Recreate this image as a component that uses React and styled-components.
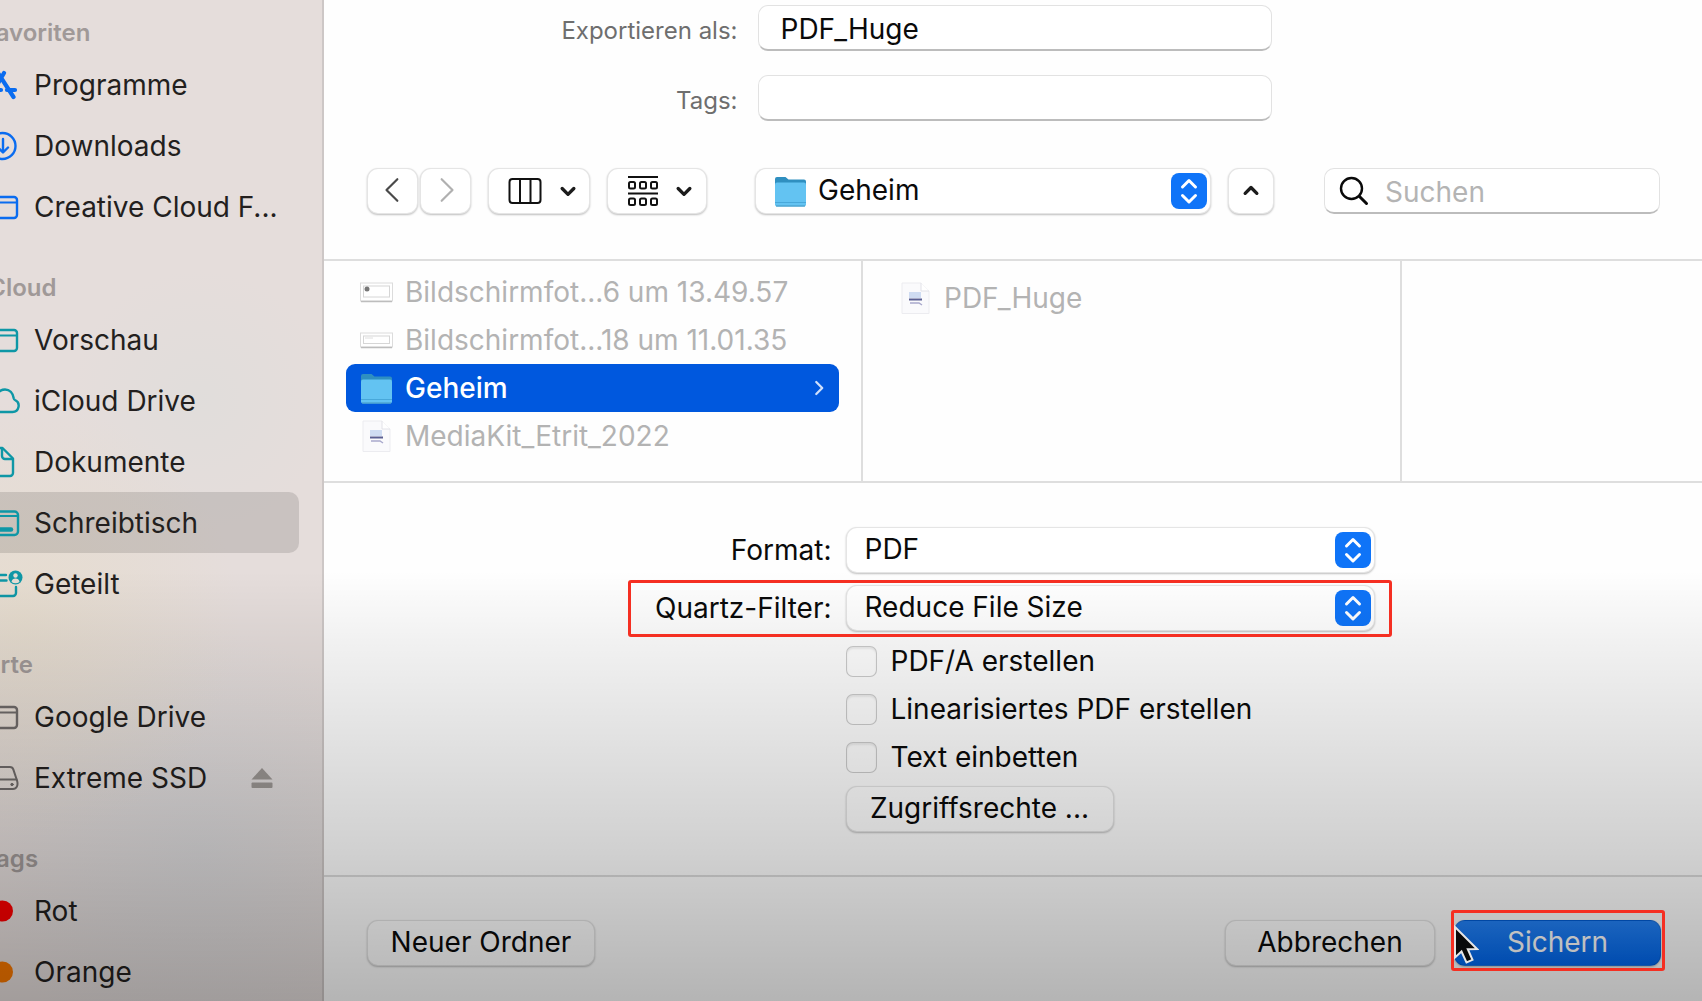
import React from "react";
import styled, { createGlobalStyle } from "styled-components";

const GlobalStyle = createGlobalStyle`
    * {
        box-sizing: border-box;
    }

    body {
        margin: 0;
        background: #fefefe;
    }

    body, button, input, select {
        font-family: Inter, "Liberation Sans", sans-serif;
        font-size: 28px;
        color: #0a0a0a;
    }

    svg {
        display: block;
        flex-shrink: 0;
    }
`;

const Window = styled.div`
    position: relative;
    display: flex;
    height: 100vh;
    overflow: hidden;
    background: #fefefe;
`;

/* darkens the lower part of the window, the red frames stay above it */
const Shade = styled.div`
    position: absolute;
    inset: 0;
    z-index: 1;
    pointer-events: none;
    background: linear-gradient(to bottom, rgba(0, 0, 0, 0) 57%, rgba(0, 0, 0, 0.05) 64%, rgba(0, 0, 0, 0.18) 85%, rgba(0, 0, 0, 0.29) 100%);
`;

const Sidebar = styled.nav`
    display: flex;
    flex-direction: column;
    flex-shrink: 0;
    gap: 30px;
    width: 344px;
    margin-left: -20px;
    padding-top: 12px;
    overflow: hidden;
    border-right: 2px solid #cdc7c6;
    background:
        radial-gradient(circle at 40px 620px, rgba(230, 220, 205, 0.9), rgba(230, 220, 205, 0) 220px),
        radial-gradient(circle at 220px 400px, rgba(224, 221, 219, 0.9), rgba(224, 221, 219, 0) 130px),
        radial-gradient(circle at 220px 850px, rgba(216, 217, 220, 0.7), rgba(216, 217, 220, 0) 220px),
        #e5dddb;
`;

const Group = styled.section`
    display: flex;
    flex-direction: column;

    & h2 {
        margin: 0;
        padding-left: 2px;
        font-size: 24px;
        font-weight: 600;
        line-height: 42px;
        color: #a09998;
    }
`;

const Place = styled.button`
    display: flex;
    align-items: center;
    gap: 10px;
    height: 61px;
    margin-right: 23px;
    padding: 0 26px 0 0;
    border: none;
    border-radius: 0 10px 10px 0;
    background: ${(props) => (props.$selected ? "rgba(0, 0, 0, 0.12)" : "transparent")};
    color: #231f1e;
    text-align: left;
    white-space: nowrap;

    & span {
        flex: 1;
    }
`;

const Panel = styled.main`
    display: flex;
    flex: 1;
    flex-direction: column;
    min-width: 0;
`;

const NameForm = styled.div`
    display: grid;
    grid-template-columns: 1fr 514px 1fr;
    align-items: center;
    gap: 24px 20px;
    padding: 5px 0 0 3px;

    & label {
        grid-column: 1;
        padding-top: 4px;
        font-size: 24px;
        color: #6e6e6e;
        text-align: right;
    }
`;

const TextInput = styled.input`
    width: 100%;
    height: 46px;
    padding: 2px 22px 0;
    border: 1px solid #e2e2e2;
    border-bottom: 2px solid #bcbcbc;
    border-radius: 10px;
    background: #ffffff;
    outline: none;
`;

const Toolbar = styled.div`
    display: flex;
    align-items: center;
    gap: 17px;
    padding: 47px 42px 45px 43px;
`;

const NavPair = styled.div`
    display: flex;
    gap: 2px;
`;

const Button = styled.button`
    display: flex;
    align-items: center;
    justify-content: center;
    gap: 16px;
    flex-shrink: 0;
    width: ${(props) => props.$width}px;
    height: 46px;
    padding: ${(props) => (props.$menu ? "0 0 0 8px" : "0 0 2px")};
    border: 1px solid rgba(0, 0, 0, 0.1);
    border-radius: 11px;
    background: ${(props) => (props.$primary ? "linear-gradient(#2382f7, #0067ee)" : "#ffffff")};
    box-shadow: 0 1px 2px rgba(0, 0, 0, 0.25);
    color: ${(props) => (props.$primary ? "#ffffff" : "#0a0a0a")};
    white-space: nowrap;
`;

const PopUp = styled.div`
    position: relative;
    display: flex;
    align-items: center;
    flex: ${(props) => (props.$grow ? "1" : "none")};
    width: ${(props) => (props.$grow ? "auto" : "529px")};
    margin-left: ${(props) => (props.$grow ? "31px" : "0")};

    & select {
        width: 100%;
        height: 46px;
        padding: 0 60px 3px ${(props) => (props.$grow ? "62px" : "18px")};
        border: 1px solid rgba(0, 0, 0, 0.1);
        border-radius: 11px;
        background: #ffffff;
        box-shadow: 0 1px 2px rgba(0, 0, 0, 0.25);
        appearance: none;
        outline: none;
    }
`;

const PopUpIcon = styled.span`
    position: absolute;
    left: 19px;
    pointer-events: none;
`;

const PopUpArrows = styled.span`
    position: absolute;
    right: 4px;
    pointer-events: none;
`;

const Search = styled.label`
    display: flex;
    align-items: center;
    gap: 16px;
    width: 336px;
    height: 46px;
    margin-left: 33px;
    padding: 0 14px;
    border: 1px solid #e2e2e2;
    border-bottom: 2px solid #bcbcbc;
    border-radius: 10px;
    background: #ffffff;

    & input {
        width: 100%;
        min-width: 0;
        padding: 2px 0 0;
        border: none;
        background: transparent;
        outline: none;
    }

    & input::placeholder {
        color: #b4b4b4;
    }
`;

const Browser = styled.div`
    display: grid;
    grid-template-columns: 537px 539px 1fr;
    height: 224px;
    border-top: 2px solid #dedede;
    border-bottom: 2px solid #dedede;
`;

const Column = styled.div`
    display: flex;
    flex-direction: column;
    padding: ${(props) => (props.$inset ? "13px" : "7px")} 22px;

    & + & {
        border-left: 2px solid #dedede;
    }
`;

const File = styled.button`
    display: flex;
    align-items: center;
    gap: 12px;
    height: 48px;
    padding: 0 10px 0 14px;
    border: none;
    border-radius: 9px;
    background: ${(props) => (props.$selected ? "#0058de" : "transparent")};
    color: ${(props) => (props.$selected ? "#ffffff" : "#b3b3b3")};
    font-weight: ${(props) => (props.$selected ? 500 : 400)};
    text-align: left;
    white-space: nowrap;

    & span {
        flex: 1;
        padding-bottom: 1px;
    }
`;

const Options = styled.div`
    display: flex;
    flex: 1;
    flex-direction: column;
    align-items: center;
    gap: 12px;
    padding-top: 44px;
`;

const OptionRow = styled.div`
    position: relative;
    display: flex;
    align-items: center;
    gap: 14px;

    & > label {
        width: 180px;
        text-align: right;
        white-space: nowrap;
    }
`;

const Extras = styled.div`
    display: flex;
    flex-direction: column;
    align-items: flex-start;
    width: 529px;
    margin: -6px 0 0 194px;

    & > :last-child {
        margin-top: 5px;
    }
`;

const Check = styled.label`
    display: flex;
    align-items: center;
    gap: 14px;
    height: 48px;

    & input {
        width: 31px;
        height: 31px;
        margin: 0;
        border: 1px solid rgba(0, 0, 0, 0.2);
        border-radius: 7px;
        background: #ffffff;
        box-shadow: inset 0 2px 2px rgba(0, 0, 0, 0.08);
        appearance: none;
    }
`;

const Frame = styled.span`
    position: absolute;
    inset: ${(props) => props.$inset};
    z-index: 2;
    border: 3px solid #f52f22;
    border-radius: 3px;
    pointer-events: none;
`;

const Footer = styled.footer`
    display: flex;
    gap: 19px;
    padding: 43px 41px 35px 43px;
    border-top: 2px solid #dcdcdc;

    & > :first-child {
        margin-right: auto;
    }
`;

const SaveSlot = styled.div`
    position: relative;
`;

const Pointer = styled.span`
    position: absolute;
    top: 5px;
    left: -1px;
    z-index: 3;
    pointer-events: none;
`;

const BLUE = "#0a6cf0";
const TEAL = "#0e97a6";
const GRAY = "#6f6a69";

const PlaceIcon = ({ color, children }) => (
    <svg width="44" height="44" viewBox="0 0 44 44" fill="none" stroke={color} strokeWidth="2.4" strokeLinecap="round" strokeLinejoin="round">
        {children}
    </svg>
);

const windowShape = (
    <>
        <rect x="8" y="12" width="29" height="21" rx="3" />
        <path d="M8 17.5h29" strokeWidth="2" />
    </>
);

const AppsIcon = () => (
    <PlaceIcon color={BLUE}>
        <path d="M24 10 10 34M18 10l15.500 24M5 27h16M27 27h8" strokeWidth="4.200" />
    </PlaceIcon>
);

const DownloadIcon = () => (
    <PlaceIcon color={BLUE}>
        <circle cx="22.500" cy="22" r="13" />
        <path d="M23 15v13M18 23.500l5 5 5-5" />
    </PlaceIcon>
);

const WindowIcon = ({ color }) => <PlaceIcon color={color}>{windowShape}</PlaceIcon>;

const CloudIcon = () => (
    <PlaceIcon color={TEAL}>
        <path d="M12 33h20.500a6.300 6.300 0 0 0 2.500-12c-.8-.4-1-.6-1.200-1.500C33 14 29.500 10.500 25 10.500c-4 0-6.600 2-8.200 5.200-4-.8-6.800 1.300-7.300 4.800C6.500 21.500 5 24 5 26.600 5 30.500 8 33 12 33z" />
    </PlaceIcon>
);

const DocIcon = () => (
    <PlaceIcon color={TEAL}>
        <path d="M13 8h9.500L33 18.500V33a3 3 0 0 1-3 3H13a3 3 0 0 1-3-3V11a3 3 0 0 1 3-3z" />
        <path d="M22 8.500V16a3 3 0 0 0 3 3h7.500" />
    </PlaceIcon>
);

const DesktopIcon = () => (
    <PlaceIcon color={TEAL}>
        <rect x="6" y="10.500" width="32" height="23.500" rx="3.500" />
        <path d="M6 15h32" strokeWidth="2" />
        <path d="M13 28.500h18" strokeWidth="4.500" />
    </PlaceIcon>
);

const SharedIcon = () => (
    <PlaceIcon color={TEAL}>
        <path d="M26 13H11a3 3 0 0 0-3 3v15a3 3 0 0 0 3 3h22a3 3 0 0 0 3-3v-6M8 18.500h18.500" />
        <circle cx="35.500" cy="15.500" r="7" fill={TEAL} stroke="none" />
        <circle cx="35.500" cy="13.500" r="2.200" fill="#e6ddd4" stroke="none" />
        <path d="M31.500 20c.5-2.400 2-3.400 4-3.400s3.500 1 4 3.400c-2.500 1.700-5.500 1.700-8 0z" fill="#e6ddd4" stroke="none" />
    </PlaceIcon>
);

const DriveIcon = () => (
    <PlaceIcon color={GRAY}>
        <path d="M14 11h16c1.800 0 2.800.8 3.300 2.400L37 24.500c1.500 5-.5 8.500-4 8.500H11c-3.500 0-5.500-3.500-4-8.500l3.700-11.100C11.200 11.800 12.200 11 14 11z" strokeWidth="2" />
        <path d="M7.500 23.500h29" strokeWidth="2" />
        <circle cx="32" cy="28.500" r="1.200" fill={GRAY} strokeWidth="1" />
    </PlaceIcon>
);

const TagIcon = ({ color }) => (
    <PlaceIcon color="none">
        <circle cx="22.500" cy="22" r="10.500" fill={color} />
    </PlaceIcon>
);

const EjectIcon = () => (
    <svg width="22" height="22" viewBox="0 0 22 22" fill="#9b9693">
        <path d="M11 1 21.500 12.500H.5z" />
        <rect x="0.500" y="15.500" width="21" height="5.500" rx="1" />
    </svg>
);

const FolderIcon = () => (
    <svg width="33" height="33" viewBox="0 0 33 33">
        <path d="M1 4a2 2 0 0 1 2-2h8.500l3 2.500H30a2 2 0 0 1 2 2V14H1z" fill="#2f8fc0" />
        <rect x="1" y="7.500" width="31" height="24" rx="2" fill="#63c3f2" />
        <path d="M1 27.500h31" stroke="#48a8da" strokeWidth="1" />
        <path d="M2 31h29" stroke="#4a9fca" strokeWidth="1.200" />
    </svg>
);

const ScreenshotIcon = ({ flat }) => (
    <svg width="33" height="33" viewBox="0 0 33 33">
        <rect x="0.500" y={flat ? 9 : 7} width="32" height={flat ? 14 : 18} fill="#ffffff" stroke="#dcdcdc" />
        <path d={flat ? "M1 23.500h31" : "M1 25.500h31"} stroke="#bdbdbd" strokeWidth="1.500" />
        <rect x="3.500" y={flat ? 12 : 10} width="26" height={flat ? 7.5 : 11} fill="none" stroke="#d6d6d6" />
        {flat ? <path d="M5 14h8" stroke="#dedede" /> : <circle cx="7" cy="13" r="2.500" fill="#777777" />}
    </svg>
);

const PdfIcon = () => (
    <svg width="33" height="33" viewBox="0 0 33 33">
        <path d="M3 1h19l8 8v22.500H3z" fill="#fafafc" stroke="#ececf0" />
        <path d="M22 1v8h8" fill="#ffffff" stroke="#e2e2e8" />
        <rect x="10" y="10" width="12" height="6" fill="#cfdcf2" />
        <path d="M10 17.500h13" stroke="#5a5f92" strokeWidth="2" />
        <path d="M11 21h9l3 2" fill="none" stroke="#a9a9cc" strokeWidth="1.500" />
    </svg>
);

const Arrow = ({ d, color = "#1c1c1c", size = 24, weight = 2 }) => (
    <svg width={size} height={size} viewBox="0 0 24 24" fill="none" stroke={color} strokeWidth={weight} strokeLinecap="round" strokeLinejoin="round">
        <path d={d} />
    </svg>
);

const ColumnsIcon = () => (
    <svg width="34" height="28" viewBox="0 0 34 28" fill="none" stroke="#111111" strokeWidth="2">
        <rect x="1.500" y="2" width="31" height="24" rx="3" />
        <path d="M12 2v24M22.500 2v24" />
    </svg>
);

const GroupsIcon = () => (
    <svg width="30" height="32" viewBox="0 0 30 32" fill="none" stroke="#111111" strokeWidth="2">
        <path d="M0 2h30M0 18.500h30" />
        {[1, 12, 23].map((x) => (
            <React.Fragment key={x}>
                <rect x={x} y="7" width="6" height="6.500" rx="1.500" />
                <rect x={x} y="23.500" width="6" height="6.500" rx="1.500" />
            </React.Fragment>
        ))}
    </svg>
);

const ArrowsIcon = () => (
    <svg width="36" height="36" viewBox="0 0 36 36" fill="none" stroke="#ffffff" strokeWidth="3" strokeLinecap="round" strokeLinejoin="round">
        <rect width="36" height="36" rx="8" fill="#0f74f8" stroke="none" />
        <path d="M11.500 14 18 7.500 24.500 14M11.500 22.500 18 29l6.500-6.500" />
    </svg>
);

const SearchIcon = () => (
    <svg width="30" height="30" viewBox="0 0 30 30" fill="none" stroke="#0a0a0a" strokeLinecap="round">
        <circle cx="12.500" cy="12.500" r="10.500" strokeWidth="2.400" />
        <path d="m20.500 20.500 7 7" strokeWidth="3" />
    </svg>
);

const PointerIcon = () => (
    <svg width="26" height="40" viewBox="0 0 26 40">
        <path d="M2 2v30.500l6.500-6 5 11 6-2.700-4.700-10.600L24 24z" fill="#0a0a0a" stroke="#e6e6e6" strokeWidth="2" />
    </svg>
);

const groups = [
    {
        title: "Favoriten",
        places: [
            { name: "Programme", icon: <AppsIcon /> },
            { name: "Downloads", icon: <DownloadIcon /> },
            { name: "Creative Cloud F...", icon: <WindowIcon color={BLUE} /> },
        ],
    },
    {
        title: "iCloud",
        places: [
            { name: "Vorschau", icon: <WindowIcon color={TEAL} /> },
            { name: "iCloud Drive", icon: <CloudIcon /> },
            { name: "Dokumente", icon: <DocIcon /> },
            { name: "Schreibtisch", icon: <DesktopIcon />, selected: true },
            { name: "Geteilt", icon: <SharedIcon /> },
        ],
    },
    {
        title: "Orte",
        places: [
            { name: "Google Drive", icon: <WindowIcon color={GRAY} /> },
            { name: "Extreme SSD", icon: <DriveIcon />, eject: true },
        ],
    },
    {
        title: "Tags",
        places: [
            { name: "Rot", icon: <TagIcon color="#fa0000" /> },
            { name: "Orange", icon: <TagIcon color="#f57600" /> },
        ],
    },
];

const files = [
    { name: "Bildschirmfot...6 um 13.49.57", icon: <ScreenshotIcon /> },
    { name: "Bildschirmfot...18 um 11.01.35", icon: <ScreenshotIcon flat /> },
    { name: "Geheim", icon: <FolderIcon />, selected: true },
    { name: "MediaKit_Etrit_2022", icon: <PdfIcon /> },
];

const checks = ["PDF/A erstellen", "Linearisiertes PDF erstellen", "Text einbetten"];

const DOWN = "m5 9 7 7 7-7";

export default function App() {
    return (
        <Window>
            <GlobalStyle />
            <Sidebar>
                {groups.map((group) => (
                    <Group key={group.title}>
                        <h2>{group.title}</h2>
                        {group.places.map((place) => (
                            <Place key={place.name} $selected={place.selected}>
                                {place.icon}
                                <span>{place.name}</span>
                                {place.eject && <EjectIcon />}
                            </Place>
                        ))}
                    </Group>
                ))}
            </Sidebar>

            <Panel>
                <NameForm>
                    <label htmlFor="name">Exportieren als:</label>
                    <TextInput id="name" defaultValue="PDF_Huge" />
                    <label htmlFor="tags">Tags:</label>
                    <TextInput id="tags" />
                </NameForm>

                <Toolbar>
                    <NavPair>
                        <Button $width={51} aria-label="Zurück">
                            <Arrow d="M16 2 6 12l10 10" color="#4a4a4a" size={26} />
                        </Button>
                        <Button $width={51} aria-label="Vor">
                            <Arrow d="m8 2 10 10L8 22" color="#b0b0b0" size={26} />
                        </Button>
                    </NavPair>
                    <Button $menu $width={102} aria-label="Spalten">
                        <ColumnsIcon />
                        <Arrow d={DOWN} size={20} weight={4} />
                    </Button>
                    <Button $menu $width={100} aria-label="Gruppieren">
                        <GroupsIcon />
                        <Arrow d={DOWN} size={20} weight={4} />
                    </Button>
                    <PopUp $grow>
                        <select aria-label="Ordner" defaultValue="Geheim">
                            <option>Geheim</option>
                        </select>
                        <PopUpIcon>
                            <FolderIcon />
                        </PopUpIcon>
                        <PopUpArrows>
                            <ArrowsIcon />
                        </PopUpArrows>
                    </PopUp>
                    <Button $width={46} aria-label="Einklappen">
                        <Arrow d="m5 16 7-7 7 7" size={20} weight={4} />
                    </Button>
                    <Search>
                        <SearchIcon />
                        <input placeholder="Suchen" aria-label="Suchen" />
                    </Search>
                </Toolbar>

                <Browser>
                    <Column>
                        {files.map((file) => (
                            <File key={file.name} $selected={file.selected}>
                                {file.icon}
                                <span>{file.name}</span>
                                {file.selected && <Arrow d="m7 4 8 8-8 8" color="#cfe0fb" size={18} weight={3} />}
                            </File>
                        ))}
                    </Column>
                    <Column $inset>
                        <File>
                            <PdfIcon />
                            <span>PDF_Huge</span>
                        </File>
                    </Column>
                    <Column />
                </Browser>

                <Options>
                    <OptionRow>
                        <label htmlFor="format">Format:</label>
                        <PopUp>
                            <select id="format" defaultValue="PDF">
                                <option>PDF</option>
                            </select>
                            <PopUpArrows>
                                <ArrowsIcon />
                            </PopUpArrows>
                        </PopUp>
                    </OptionRow>
                    <OptionRow>
                        <label htmlFor="filter">Quartz-Filter:</label>
                        <PopUp>
                            <select id="filter" defaultValue="Reduce File Size">
                                <option>Reduce File Size</option>
                            </select>
                            <PopUpArrows>
                                <ArrowsIcon />
                            </PopUpArrows>
                        </PopUp>
                        <Frame $inset="-5px -17px -6px -24px" />
                    </OptionRow>
                    <Extras>
                        {checks.map((text) => (
                            <Check key={text}>
                                <input type="checkbox" />
                                {text}
                            </Check>
                        ))}
                        <Button $width={268}>Zugriffsrechte ...</Button>
                    </Extras>
                </Options>

                <Footer>
                    <Button $width={228}>Neuer Ordner</Button>
                    <Button $width={210}>Abbrechen</Button>
                    <SaveSlot>
                        <Button $primary $width={207}>Sichern</Button>
                        <Frame $inset="-10px -4px -5px -3px" />
                        <Pointer>
                            <PointerIcon />
                        </Pointer>
                    </SaveSlot>
                </Footer>
            </Panel>
            <Shade />
        </Window>
    );
}
